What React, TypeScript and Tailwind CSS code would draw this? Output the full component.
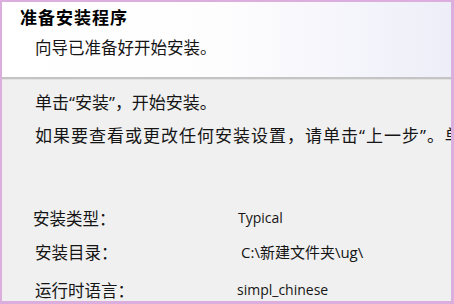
import React from "react";

const cjk = { fontFamily: '"Noto Sans CJK SC", "Noto Sans", sans-serif' } as React.CSSProperties;
const latin = { fontFamily: '"Open Sans", "Noto Sans CJK SC", sans-serif' } as React.CSSProperties;

function Q({ c }: { c: string }) {
  return <span style={latin}>{c}</span>;
}

export default function App() {
  return (
    <div className="w-[454px] h-[304px] overflow-hidden bg-[#dcaedd] pt-[2px] pl-[2px] pr-[3px] pb-[3px]">
      <div className="flex h-full flex-col overflow-hidden text-[#151515]" style={cjk}>
        <div className="h-[75px] shrink-0 bg-gradient-to-r from-white via-[#fdfdfe] to-[#eeeef9] pl-[18px] pt-[5px]">
          <div className="text-[17px] leading-[20px] font-bold tracking-[1px] text-black">准备安装程序</div>
          <div className="mt-[10px] pl-[15px] text-[16.5px] leading-[20px]">向导已准备好开始安装。</div>
        </div>
        <div className="h-[2px] shrink-0 bg-[#c4c4c4]" />
        <div className="h-[1px] shrink-0 bg-[#e2e2e2]" />
        <div className="flex-1 bg-[#f0f0f0] pl-[33px] pt-[11px] text-[16.5px] leading-[22px] whitespace-nowrap">
          <div className="text-[17px]">
            单击<Q c="“" />安装<Q c="”" />，开始安装。
          </div>
          <div className="mt-[10px] text-[17px] tracking-[1px]">
            如果要查看或更改任何安装设置，请单击<Q c="“" />上一步<Q c="”" />。单击<Q c="“" />取消<Q c="”" />退出向导。
          </div>
          <div className="mt-[60px] flex flex-col">
            <div className="flex items-center">
              <div className="w-[205px] -ml-[2px]">安装类型：</div>
              <div className="text-[14px]" style={latin}>Typical</div>
            </div>
            <div className="mt-[12px] flex items-center">
              <div className="w-[206px]">安装目录：</div>
              <div className="text-[15px]">
                <span style={latin}>C:\</span>新建文件夹<span style={latin}>\ug\</span>
              </div>
            </div>
            <div className="mt-[16px] flex items-center">
              <div className="w-[202px]">运行时语言：</div>
              <div className="text-[14px]" style={latin}>simpl_chinese</div>
            </div>
          </div>
        </div>
      </div>
    </div>
  );
}
